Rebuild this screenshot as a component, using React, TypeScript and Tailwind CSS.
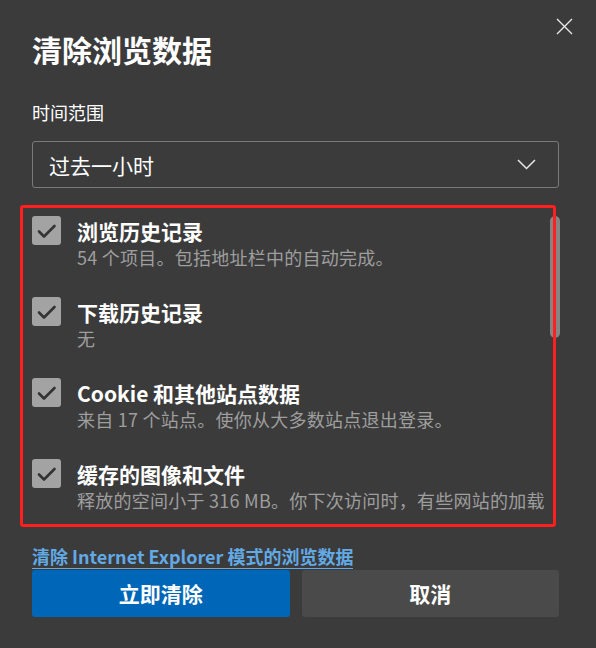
import React from 'react';

const items = [
  { title: '浏览历史记录', desc: '54 个项目。包括地址栏中的自动完成。' },
  { title: '下载历史记录', desc: '无' },
  { title: 'Cookie 和其他站点数据', desc: '来自 17 个站点。使你从大多数站点退出登录。' },
  { title: '缓存的图像和文件', desc: '释放的空间小于 316 MB。你下次访问时，有些网站的加载' },
];

function CheckBox() {
  return (
    <div className="w-[29px] h-[29px] shrink-0 rounded-[3px] bg-[#a3a3a3] flex items-center justify-center">
      <svg width="29" height="29" viewBox="0 0 29 29" fill="none">
        <path d="M7 15.5 L12 20.5 L22.5 10" stroke="#333333" strokeWidth="2.6" strokeLinecap="round" strokeLinejoin="round" />
      </svg>
    </div>
  );
}

export default function App() {
  return (
    <div className="relative w-[596px] h-[648px] overflow-hidden bg-[#3b3b3b] px-[32px] pt-[29px] font-['Noto_Sans_CJK_SC','Noto_Sans',sans-serif] text-white">
      {/* close */}
      <button className="absolute left-[556px] top-[18px] w-[17px] h-[17px]">
        <svg width="17" height="17" viewBox="0 0 17 17" fill="none">
          <path d="M1 1 L16 16 M16 1 L1 16" stroke="#e8e8e8" strokeWidth="1.4" />
        </svg>
      </button>

      <h1 className="text-[30px] leading-[40px] font-bold">清除浏览数据</h1>

      <div className="mt-[31px] text-[18px] leading-[24px]">时间范围</div>

      <div className="mt-[17px] w-[527px] h-[47px] border border-[#7a7a7a] rounded-[3px] flex items-center justify-between pl-[16px] pr-[22px]">
        <span className="text-[21px] leading-[28px]">过去一小时</span>
        <svg width="19" height="11" viewBox="0 0 19 11" fill="none">
          <path d="M1 1 L9.5 9.5 L18 1" stroke="#e8e8e8" strokeWidth="1.5" />
        </svg>
      </div>

      {/* list */}
      <div className="relative mt-[17px] w-[527px] h-[322px] flex">
        <div className="flex-1 overflow-hidden pt-[11px] flex flex-col gap-[27px]">
          {items.map(it => (
            <div key={it.title} className="flex gap-[16px]">
              <CheckBox />
              <div className="pt-[2px]">
                <div className="text-[21px] leading-[26px] font-bold whitespace-nowrap">{it.title}</div>
                <div className="text-[18px] leading-[26px] tracking-[0.25px] text-[#9e9e9e] whitespace-nowrap">{it.desc}</div>
              </div>
            </div>
          ))}
        </div>
        <div className="w-[10px] pt-[11px] -mr-[1px]">
          <div className="h-[122px] rounded-full bg-[#858585]" />
        </div>
        <div className="absolute -left-[12px] right-[3px] top-0 bottom-0 border-[3px] border-[#ff1f1f] rounded-[3px] pointer-events-none" />
      </div>

      <div className="mt-[17px] h-[25px]">
        <span className="inline-block text-[18px] leading-[24px] font-semibold text-[#62aae6] border-b border-[#62aae6]">
          清除 Internet Explorer 模式的浏览数据
        </span>
      </div>

      <div className="mt-[1px] w-[527px] grid grid-cols-2 gap-[12px]">
        <button className="h-[47px] rounded-[3px] bg-[#0067b8] text-[21px] font-bold text-white">立即清除</button>
        <button className="h-[47px] rounded-[3px] bg-[#4a4a4a] text-[21px] font-bold text-white">取消</button>
      </div>
    </div>
  );
}
